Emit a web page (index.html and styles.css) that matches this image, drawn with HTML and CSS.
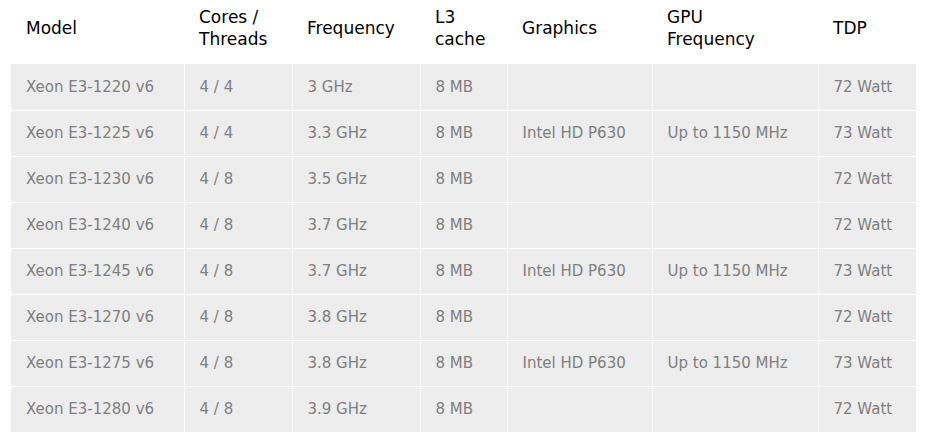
FILE: index.html
```html
<!DOCTYPE html>
<html>
<head>
<meta charset="utf-8">
<link rel="stylesheet" href="styles.css">
</head>
<body>
<table class="spec">
  <colgroup>
    <col class="c1"><col class="c2"><col class="c3"><col class="c4"><col class="c5"><col class="c6"><col class="c7">
  </colgroup>
  <thead>
    <tr><th>Model</th><th>Cores /<br>Threads</th><th>Frequency</th><th>L3<br>cache</th><th>Graphics</th><th>GPU<br>Frequency</th><th>TDP</th></tr>
  </thead>
  <tbody>
    <tr><td>Xeon E3-1220 v6</td><td>4 / 4</td><td>3 GHz</td><td>8 MB</td><td></td><td></td><td>72 Watt</td></tr>
    <tr><td>Xeon E3-1225 v6</td><td>4 / 4</td><td>3.3 GHz</td><td>8 MB</td><td>Intel HD P630</td><td>Up to 1150 MHz</td><td>73 Watt</td></tr>
    <tr><td>Xeon E3-1230 v6</td><td>4 / 8</td><td>3.5 GHz</td><td>8 MB</td><td></td><td></td><td>72 Watt</td></tr>
    <tr><td>Xeon E3-1240 v6</td><td>4 / 8</td><td>3.7 GHz</td><td>8 MB</td><td></td><td></td><td>72 Watt</td></tr>
    <tr><td>Xeon E3-1245 v6</td><td>4 / 8</td><td>3.7 GHz</td><td>8 MB</td><td>Intel HD P630</td><td>Up to 1150 MHz</td><td>73 Watt</td></tr>
    <tr><td>Xeon E3-1270 v6</td><td>4 / 8</td><td>3.8 GHz</td><td>8 MB</td><td></td><td></td><td>72 Watt</td></tr>
    <tr><td>Xeon E3-1275 v6</td><td>4 / 8</td><td>3.8 GHz</td><td>8 MB</td><td>Intel HD P630</td><td>Up to 1150 MHz</td><td>73 Watt</td></tr>
    <tr><td>Xeon E3-1280 v6</td><td>4 / 8</td><td>3.9 GHz</td><td>8 MB</td><td></td><td></td><td>72 Watt</td></tr>
  </tbody>
</table>
</body>
</html>
```
FILE: styles.css
```css
html, body {
  margin: 0;
  padding: 0;
  background: #fff;
}
body {
  padding: 0 0 0 11px;
  font-family: "DejaVu Sans", Verdana, sans-serif;
}
.spec {
  border-collapse: collapse;
  table-layout: fixed;
  width: 905px;
}
.c1 { width: 173px; }
.c2 { width: 108px; }
.c3 { width: 128px; }
.c4 { width: 87px; }
.c5 { width: 145px; }
.c6 { width: 166px; }
.c7 { width: 98px; }
.spec th {
  height: 64px;
  padding: 0 15px 8px;
  text-align: left;
  font-weight: normal;
  font-size: 17px;
  line-height: 22px;
  color: #000;
  vertical-align: middle;
  box-sizing: border-box;
}
.spec td {
  height: 46px;
  padding: 0 15px;
  background: #ededed;
  border: 1px solid #fff;
  font-size: 15px;
  color: #808080;
  box-sizing: border-box;
  white-space: nowrap;
}
.spec tbody tr:first-child td { border-top: 0; }
.spec td:first-child { border-left: 0; }
.spec td:last-child { border-right: 0; }
```
